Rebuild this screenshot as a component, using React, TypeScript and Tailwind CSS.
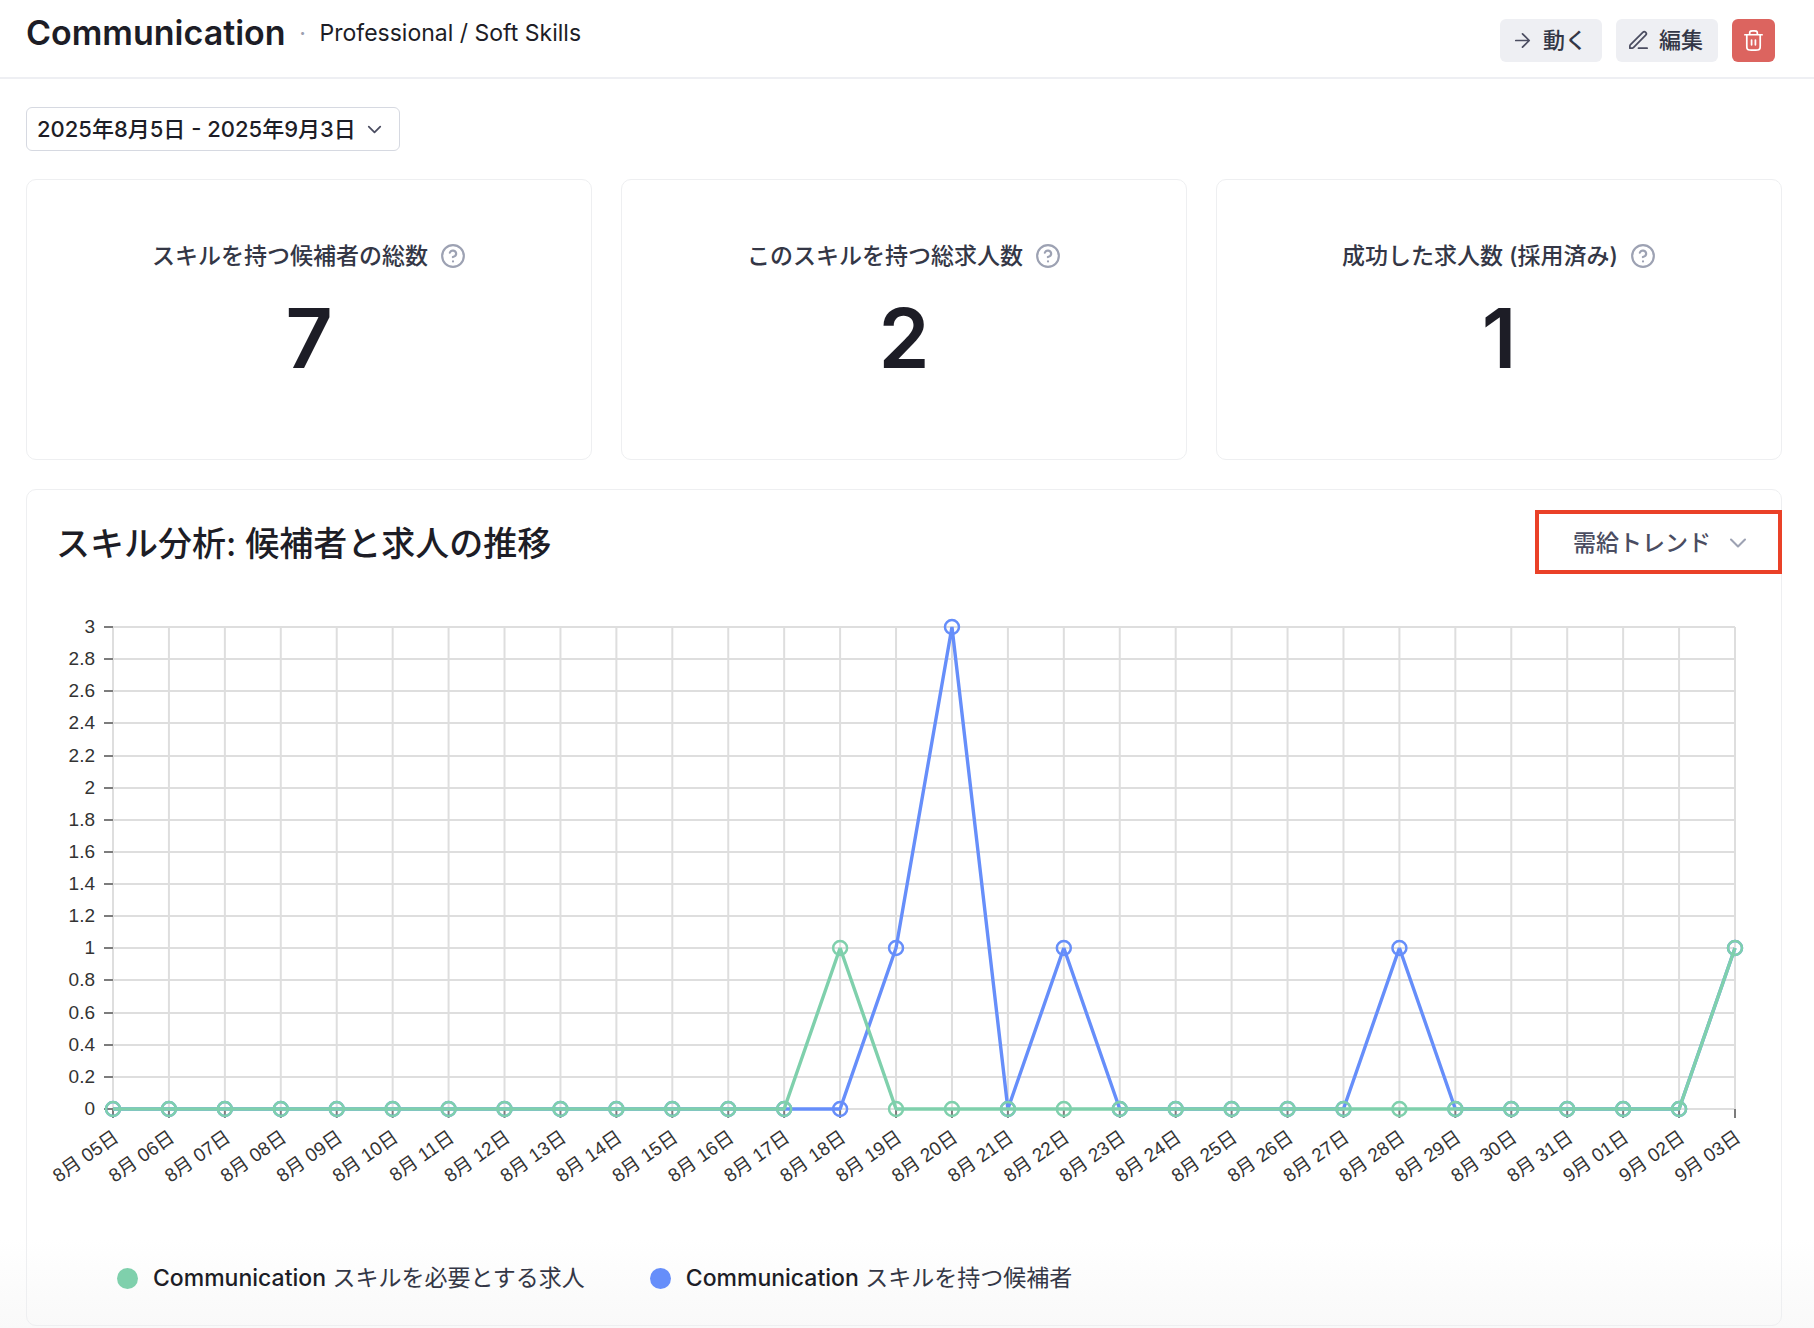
import type { ReactNode } from "react";
import { CircleHelp } from "lucide-react";

const GREEN = "#7fd0ac";
const BLUE = "#668efa";

const days = [
  ...Array.from({ length: 27 }, (_, i) => `8月 ${String(i + 5).padStart(2, "0")}日`),
  "9月 01日",
  "9月 02日",
  "9月 03日",
];

const jobs = days.map((day) => (day === "8月 18日" || day === "9月 03日" ? 1 : 0));

const candidateCounts: Record<string, number> = {
  "8月 19日": 1,
  "8月 20日": 3,
  "8月 22日": 1,
  "8月 28日": 1,
  "9月 03日": 1,
};
const candidates = days.map((day) => candidateCounts[day] ?? 0);

const stats = [
  { label: "スキルを持つ候補者の総数", value: 7 },
  { label: "このスキルを持つ総求人数", value: 2 },
  { label: "成功した求人数 (採用済み)", value: 1 },
];

type IconProps = {
  children: ReactNode;
  className?: string;
  size?: number;
};

function Icon({ children, className, size = 23 }: IconProps) {
  return (
    <svg
      aria-hidden="true"
      className={className}
      fill="none"
      height={size}
      stroke="currentColor"
      strokeLinecap="round"
      strokeLinejoin="round"
      strokeWidth={1.8}
      viewBox="0 0 24 24"
      width={size}
    >
      {children}
    </svg>
  );
}

function ChevronDown({ className, size }: { className?: string; size?: number }) {
  return (
    <Icon className={className} size={size}>
      <path d="M6 9l6 6 6-6" />
    </Icon>
  );
}

function PageHeader() {
  return (
    <header className="flex items-start justify-between border-b-2 border-[#eeeff3] pr-[39px] pl-[26px]">
      <div className="flex items-center pt-3">
        <h1 className="text-[34px] leading-[42px] font-semibold">Communication</h1>
        <span className="w-[34px] text-center text-[23px] text-[#9ca0b0]">·</span>
        <p className="text-[23px]">Professional / Soft Skills</p>
      </div>
      <div className="flex gap-[14px] pt-[19px] pb-[15px]">
        <button
          className="flex h-[43px] items-center gap-[9px] rounded-md bg-[#eeeff3] pr-[15px] pl-[11px] text-[22px] font-medium text-[#343746]"
          type="button"
        >
          <Icon className="text-[#4b4d61]">
            <path d="M5 12h14M12 5l7 7-7 7" />
          </Icon>
          動く
        </button>
        <button
          className="flex h-[43px] items-center gap-[9px] rounded-md bg-[#eeeff3] pr-[15px] pl-[11px] text-[22px] font-medium text-[#343746]"
          type="button"
        >
          <Icon className="text-[#4b4d61]">
            <path d="M12 20h9M3 20h1.67c.5 0 .74 0 .97-.06.2-.04.4-.12.58-.23.2-.13.37-.3.72-.65L19.5 6.5a2.12 2.12 0 0 0-3-3L3.94 16.06c-.35.35-.52.52-.65.72-.1.18-.19.38-.24.58-.05.23-.05.48-.05.97V20Z" />
          </Icon>
          編集
        </button>
        <button
          aria-label="削除"
          className="flex size-[43px] items-center justify-center rounded-md bg-[#dc645f] text-white"
          type="button"
        >
          <Icon>
            <path d="M16 6v-.8c0-1.12 0-1.68-.22-2.1a2 2 0 0 0-.87-.88C14.48 2 13.92 2 12.8 2h-1.6c-1.12 0-1.68 0-2.1.22a2 2 0 0 0-.88.87C8 3.52 8 4.08 8 5.2V6M10 11.5v5M14 11.5v5M3 6h18M19 6v11.2c0 1.68 0 2.52-.33 3.16a3 3 0 0 1-1.3 1.31c-.65.33-1.49.33-3.17.33H9.8c-1.68 0-2.52 0-3.16-.33a3 3 0 0 1-1.31-1.3C5 19.71 5 18.87 5 17.2V6" />
          </Icon>
        </button>
      </div>
    </header>
  );
}

function StatCard({ label, value }: { label: string; value: number }) {
  return (
    <section className="flex flex-col items-center gap-[29px] rounded-[10px] border border-[#eeeff1] pt-[62px] pb-20">
      <h2 className="flex items-center gap-3 text-[23px] leading-7 font-medium text-[#343746]">
        {label}
        <CircleHelp className="text-[#9da2b3]" size={26} strokeWidth={2} />
      </h2>
      <p className="text-[82px] leading-[80px] font-semibold">{value}</p>
    </section>
  );
}

const LEFT = 86;
const RIGHT = 1708;
const TOP = 27;
const BOTTOM = 509;

function xAt(index: number) {
  return LEFT + ((RIGHT - LEFT) * index) / (days.length - 1);
}

function yAt(value: number) {
  return Math.round(BOTTOM - ((BOTTOM - TOP) * value) / 3);
}

function Series({ color, values }: { color: string; values: number[] }) {
  return (
    <g fill="none" stroke={color}>
      <polyline
        points={values.map((v, i) => `${xAt(i)},${yAt(v)}`).join(" ")}
        strokeLinejoin="bevel"
        strokeWidth={3.4}
      />
      {values.map((v, i) => (
        <circle cx={xAt(i)} cy={yAt(v)} key={days[i]} r={7} strokeWidth={2.5} />
      ))}
    </g>
  );
}

function TrendChart() {
  const ticks = Array.from({ length: 16 }, (_, i) => i / 5);

  return (
    <svg
      aria-label="候補者と求人の推移"
      className="mt-[26px] block h-auto w-full font-['Liberation_Sans','Noto_Sans_CJK_JP',sans-serif] text-[19px]"
      role="img"
      viewBox="0 0 1754 600"
    >
      <g stroke="#dedede" strokeWidth={2}>
        {ticks.map((tick) => (
          <line key={tick} x1={LEFT} x2={RIGHT} y1={yAt(tick)} y2={yAt(tick)} />
        ))}
        {days.map((day, i) => (
          <line key={day} x1={xAt(i)} x2={xAt(i)} y1={TOP} y2={BOTTOM} />
        ))}
      </g>
      <g stroke="#7c7c7c" strokeWidth={2}>
        {ticks.map((tick) => (
          <line key={tick} x1={LEFT - 9} x2={LEFT} y1={yAt(tick)} y2={yAt(tick)} />
        ))}
        {days.map((day, i) => (
          <line key={day} x1={xAt(i)} x2={xAt(i)} y1={BOTTOM} y2={BOTTOM + 9} />
        ))}
      </g>
      <g fill="#333333" textAnchor="end">
        {ticks.map((tick) => (
          <text key={tick} x={LEFT - 18} y={yAt(tick) + 6}>
            {tick}
          </text>
        ))}
        {days.map((day, i) => (
          <text key={day} transform={`translate(${xAt(i) + 7} ${BOTTOM + 31}) rotate(-35)`}>
            {day}
          </text>
        ))}
      </g>
      <Series color={BLUE} values={candidates} />
      <Series color={GREEN} values={jobs} />
    </svg>
  );
}

function LegendItem({ dot, text }: { dot: string; text: string }) {
  return (
    <li className="flex items-center text-[#343746]">
      <span className={`mr-[15px] size-[21px] rounded-full ${dot}`} />
      <span>
        <strong className="font-medium text-[#1d1d26]">Communication</strong> {text}
      </span>
    </li>
  );
}

export default function App() {
  return (
    <div
      className="min-h-screen bg-[linear-gradient(to_top,#f9f9f9,#ffffff_90px)] font-['Inter','Noto_Sans_CJK_JP',sans-serif] text-[#1d1d26]"
      lang="ja"
    >
      <PageHeader />
      <main className="pt-7 pr-8 pb-[2px] pl-[26px]">
        <button
          className="flex h-11 items-center gap-[7px] rounded-md border border-[#d6d9e1] pr-[13px] pl-[10px] text-[22px] font-medium"
          type="button"
        >
          2025年8月5日 - 2025年9月3日
          <ChevronDown className="text-[#4b4d61]" />
        </button>

        <div className="mt-7 grid grid-cols-3 gap-[29px]">
          {stats.map((stat) => (
            <StatCard key={stat.label} label={stat.label} value={stat.value} />
          ))}
        </div>

        <section className="mt-[29px] rounded-[10px] border border-[#eeeff1] pt-5 pb-[31px]">
          <div className="flex items-center justify-between pl-[29px]">
            <h2 className="pt-1 text-[34px] leading-[42px] font-medium">
              スキル分析: 候補者と求人の推移
            </h2>
            <div className="-mr-px flex h-16 items-center border-4 border-[#ea4128] pt-0.5 pr-[26px] pl-[34px] text-[23px]">
              <select
                aria-label="グラフの種類"
                className="appearance-none bg-transparent pr-[13px] font-medium text-[#4b4d61] outline-none"
              >
                <option>需給トレンド</option>
              </select>
              <ChevronDown className="text-[#9da2b3]" size={28} />
            </div>
          </div>

          <TrendChart />

          <ul className="flex gap-[65px] pt-[62px] pl-[90px] text-[23px] leading-8">
            <LegendItem dot="bg-[#7fd0ac]" text="スキルを必要とする求人" />
            <LegendItem dot="bg-[#668efa]" text="スキルを持つ候補者" />
          </ul>
        </section>
      </main>
    </div>
  );
}
